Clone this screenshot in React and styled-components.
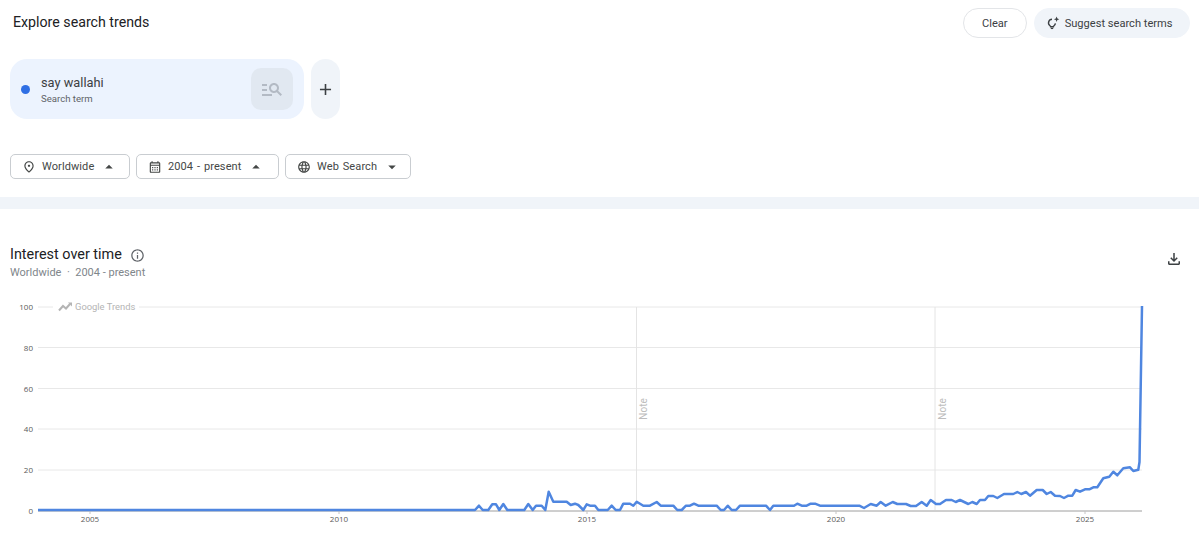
import styled, { createGlobalStyle } from "styled-components";
import {
  MdAdd,
  MdArrowDropDown,
  MdArrowDropUp,
  MdInfoOutline,
  MdLanguage,
  MdManageSearch,
  MdOutlineCalendarMonth,
  MdOutlineFileDownload,
  MdOutlinePlace,
} from "react-icons/md";

const GlobalStyle = createGlobalStyle`
  html, body {
    margin: 0;
    background: #fff;
    font-family: Roboto, "Liberation Sans", sans-serif;
    overflow: hidden;
  }
`;

const Page = styled.div`
  width: 1199px;
  height: 550px;
  overflow: hidden;
`;

const Header = styled.header`
  height: 45px;
  padding: 8px 9px 0 13px;
  box-sizing: border-box;
  display: flex;
  justify-content: space-between;
  align-items: flex-start;
`;

const Title = styled.h1`
  margin: 0;
  font-size: 14.2px;
  line-height: 29px;
  font-weight: 400;
  color: #202124;
`;

const HeaderActions = styled.div`
  display: flex;
  gap: 7px;
`;

const PillButton = styled.button`
  height: 30px;
  box-sizing: border-box;
  border-radius: 15px;
  font: 400 11.1px Roboto, sans-serif;
  color: #3c4043;
  display: flex;
  align-items: center;
  border: 1px solid ${({ $filled }) => ($filled ? "#f0f4f9" : "#e3e5e8")};
  background: ${({ $filled }) => ($filled ? "#f0f4f9" : "#fff")};
  padding: ${({ $filled }) => ($filled ? "0 16.5px 0 12px" : "0 18px")};
  gap: ${({ $filled }) => ($filled ? "5px" : "0")};
`;

const TermRow = styled.section`
  margin: 14px 0 0 10px;
  display: flex;
  gap: 7px;
`;

const TermCard = styled.div`
  width: 294px;
  height: 60px;
  box-sizing: border-box;
  border-radius: 17px;
  background: #ecf3fe;
  padding: 0 11px;
  display: flex;
  align-items: center;
`;

const Dot = styled.span`
  width: 9px;
  height: 9px;
  border-radius: 50%;
  background: #2f6fe4;
  margin-right: 11px;
`;

const TermText = styled.div`
  flex: 1;
  display: flex;
  flex-direction: column;
  gap: 2px;
`;

const TermName = styled.span`
  font-size: 12.8px;
  line-height: 17px;
  color: #3c4043;
`;

const TermKind = styled.span`
  font-size: 9.6px;
  line-height: 12px;
  color: #5f6368;
`;

const QueryBox = styled.div`
  width: 42px;
  height: 42px;
  border-radius: 10px;
  background: #e1e8f1;
  color: #b3bac4;
  display: flex;
  align-items: center;
  justify-content: center;
`;

const AddButton = styled.button`
  width: 29px;
  height: 60px;
  border: 0;
  padding: 0;
  border-radius: 15px;
  background: #f0f4f9;
  color: #3c4043;
  display: flex;
  align-items: center;
  justify-content: center;
`;

const Filters = styled.div`
  margin: 35px 0 0 10px;
  display: flex;
  gap: 6px;
`;

const Filter = styled.button`
  height: 25px;
  width: ${({ $width }) => $width}px;
  box-sizing: border-box;
  border: 1px solid #c9cdd1;
  border-radius: 5px;
  background: #fff;
  padding: 0 0 0 11px;
  font: 400 11px Roboto, sans-serif;
  letter-spacing: 0.1px;
  word-spacing: 1px;
  color: #444746;
  display: flex;
  align-items: center;
  gap: 6px;

  svg:first-child {
    color: #444746;
  }
`;

const Band = styled.div`
  height: 12px;
  margin-top: 18px;
  background: #f0f4f9;
`;

const ChartSection = styled.section`
  padding-top: 37px;
`;

const ChartHead = styled.div`
  padding: 0 16px 0 10px;
  height: 50px;
  display: flex;
  justify-content: space-between;
  align-items: flex-start;
`;

const ChartTitleRow = styled.div`
  display: flex;
  align-items: center;
  gap: 8px;
  color: #5f6368;
`;

const ChartTitle = styled.h2`
  margin: 0;
  font-size: 14.4px;
  line-height: 18px;
  font-weight: 400;
  color: #202124;
`;

const ChartSub = styled.div`
  margin-top: 2px;
  font-size: 11px;
  line-height: 14px;
  color: #80868b;
  white-space: pre;
`;

const DownloadButton = styled.button`
  border: 0;
  padding: 0;
  margin-top: 4px;
  background: none;
  color: #3c4043;
  display: flex;
`;

const ChartSvg = styled.svg`
  display: block;
`;

const AxisText = styled.text`
  font: 8px "Open Sans", sans-serif;
  fill: #5a5a5a;
`;

const NoteText = styled.text`
  font: 10px Roboto, sans-serif;
  fill: #bdbdbd;
`;

const WatermarkText = styled.text`
  font: 9.4px Roboto, sans-serif;
  fill: #b4b4b4;
`;

function SuggestIcon() {
  return (
    <svg width="13" height="14" viewBox="0 0 13 14" fill="none">
      <path
        d="M5 3.2a3.6 3.6 0 0 0-2 6.5c.4.3.6.6.6 1h2.8c0-.4.2-.7.6-1 .8-.6 1.3-1.5 1.4-2.4"
        stroke="#3c4043"
        strokeWidth="1.4"
      />
      <path d="M3.8 12.4h2.4" stroke="#3c4043" strokeWidth="1.3" />
      <path
        d="M9.6.6l.8 1.9 1.9.8-1.9.8-.8 1.9-.8-1.9-1.9-.8 1.9-.8z"
        fill="#3c4043"
      />
    </svg>
  );
}

// chart coords are page coords minus the top of the svg
const TOP = 296;

const gridYs = [
  [307, "100"],
  [347.5, "80"],
  [388.5, "60"],
  [429, "40"],
  [470, "20"],
  [510.5, "0"],
];

const years = [
  [90, "2005"],
  [339, "2010"],
  [587, "2015"],
  [836, "2020"],
  [1085, "2025"],
];

// read off the zoomed crops: [x, y] at 3x, from crop origin
const crop2015 = [
  [105,120],[117,107],[128,120],[145,120],[157,103],[168,103],[178,120],[190,102],[202,120],[253,120],
  [265,102],[278,120],[288,107],[305,107],[316,120],[326,65],[340,95],[380,95],[392,105],[405,101],
  [415,105],[430,120],[440,103],[450,107],[465,107],[475,120],[503,120],[515,107],[527,120],[540,120],
  [550,101],[570,101],[580,107],[590,95],[610,107],[630,107],[650,96],[662,107],[700,107],[712,120],
  [725,120],[738,107],[750,107],[762,101],[775,107],[830,107],[842,120],[852,120],[863,107],[875,120],
  [888,120],[900,107],[978,107],[990,120],[1000,107],[1062,107],[1072,101],[1085,107],[1100,107],
  [1112,101],[1125,101],[1140,107],
];

const crop2020 = [
  [118,107],[132,114],[152,102],[170,107],[182,96],[197,107],[218,96],[232,102],[258,102],[272,108],
  [288,108],[305,96],[320,107],[332,90],[348,102],[360,102],[378,90],[395,90],[407,96],[420,90],
  [445,102],[457,96],[470,102],[480,90],[495,90],[505,78],[520,78],[532,84],[552,72],[580,72],
  [592,66],[604,72],[618,66],[630,77],[650,60],[668,60],[680,72],[692,66],[705,77],[720,78],
  [732,84],[745,77],[757,77],[767,60],[780,65],[795,58],[808,58],[820,52],[832,52],[850,25],
  [868,20],[880,5],[892,16],[910,-5],[930,-8],[940,3],[955,-1],
];

const series = [
  [38, 510],
  ...crop2015.map(([x, y]) => [440 + x / 3, 470 + y / 3]),
  ...crop2020.map(([x, y]) => [820 + x / 3, 470 + y / 3]),
  [1139.5, 462],
  [1142, 306],
];

const linePoints = series.map(([x, y]) => `${x.toFixed(1)},${(y - TOP).toFixed(1)}`).join(" ");

function TrendChart() {
  return (
    <ChartSvg width="1199" height="254" viewBox="0 0 1199 254">
      {gridYs.slice(0, 5).map(([y]) => (
        <line key={y} x1="38" x2="1142" y1={y - TOP} y2={y - TOP} stroke="#e8e8e8" />
      ))}
      {gridYs.map(([y, label]) => (
        <AxisText key={label} x="33" y={y - TOP + 3} textAnchor="end">
          {label}
        </AxisText>
      ))}

      {[636.5, 935].map((x) => (
        <line key={x} x1={x} x2={x} y1={307 - TOP} y2={510 - TOP} stroke="#e4e4e4" />
      ))}
      <NoteText transform={`translate(647 ${409 - TOP}) rotate(-90)`} textAnchor="middle">
        Note
      </NoteText>
      <NoteText transform={`translate(945.5 ${409 - TOP}) rotate(-90)`} textAnchor="middle">
        Note
      </NoteText>

      <rect x="53" y="4" width="86" height="14" fill="#fff" />
      <path
        d="M59 14.5l4-4.5 3 2.5 4-4.5"
        fill="none"
        stroke="#b4b4b4"
        strokeWidth="2"
      />
      <path d="M68 6.5h4v4z" fill="#b4b4b4" />
      <WatermarkText x="75" y="14">Google Trends</WatermarkText>

      <line x1="38" x2="1142" y1={511 - TOP} y2={511 - TOP} stroke="#9e9e9e" />
      {years.map(([x, label]) => (
        <g key={label}>
          <line x1={x} x2={x} y1={511 - TOP} y2={514 - TOP} stroke="#c4c4c4" />
          <AxisText x={x} y={522 - TOP} textAnchor="middle">
            {label}
          </AxisText>
        </g>
      ))}

      <polyline
        points={linePoints}
        fill="none"
        stroke="#4f86e0"
        strokeWidth="2.5"
        strokeLinejoin="round"
      />
    </ChartSvg>
  );
}

export default function App() {
  return (
    <Page>
      <GlobalStyle />
      <Header>
        <Title>Explore search trends</Title>
        <HeaderActions>
          <PillButton>Clear</PillButton>
          <PillButton $filled>
            <SuggestIcon />
            Suggest search terms
          </PillButton>
        </HeaderActions>
      </Header>

      <TermRow>
        <TermCard>
          <Dot />
          <TermText>
            <TermName>say wallahi</TermName>
            <TermKind>Search term</TermKind>
          </TermText>
          <QueryBox>
            <MdManageSearch size={24} />
          </QueryBox>
        </TermCard>
        <AddButton>
          <MdAdd size={19} />
        </AddButton>
      </TermRow>

      <Filters>
        <Filter $width={120}>
          <MdOutlinePlace size={14} />
          <span>Worldwide</span>
          <MdArrowDropUp size={18} />
        </Filter>
        <Filter $width={143}>
          <MdOutlineCalendarMonth size={14} />
          <span>2004 - present</span>
          <MdArrowDropUp size={18} />
        </Filter>
        <Filter $width={126}>
          <MdLanguage size={14} />
          <span>Web Search</span>
          <MdArrowDropDown size={18} />
        </Filter>
      </Filters>

      <Band />

      <ChartSection>
        <ChartHead>
          <div>
            <ChartTitleRow>
              <ChartTitle>Interest over time</ChartTitle>
              <MdInfoOutline size={15} />
            </ChartTitleRow>
            <ChartSub>Worldwide  ·  2004 - present</ChartSub>
          </div>
          <DownloadButton>
            <MdOutlineFileDownload size={18} />
          </DownloadButton>
        </ChartHead>
        <TrendChart />
      </ChartSection>
    </Page>
  );
}
